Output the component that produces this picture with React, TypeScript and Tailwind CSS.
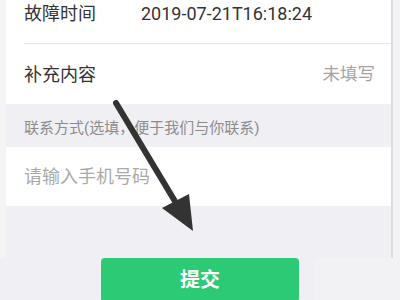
export default function App() {
  return (
    <div
      className="relative w-[400px] h-[300px] overflow-hidden bg-[#f3f3f5] text-[#333]"
      style={{ fontFamily: "Roboto, 'Noto Sans CJK SC', sans-serif" }}
    >
      <div className="flex h-[258px]">
        <div className="w-[6px] bg-[#f4f4f5]" />
        <div className="flex flex-col flex-1 border-r-2 border-[#dcdce0] bg-[#efeff4]">
          <div className="bg-white -mt-[16px]">
            <div className="flex items-center h-[60px] ml-[18px] border-b border-[#e6e6e6]">
              <span className="text-[18px] w-[117px]">故障时间</span>
              <span className="text-[18px]">2019-07-21T16:18:24</span>
            </div>
            <div className="flex items-center justify-between h-[60px] pl-[18px] pr-[16px]">
              <span className="text-[18px]">补充内容</span>
              <span className="text-[17.5px] text-[#a3a3a3]">未填写</span>
            </div>
          </div>
          <div className="h-[43px] flex items-end pb-[8px] pl-[18px] text-[15px] text-[#8c8c8c]">
            联系方式(选填，便于我们与你联系)
          </div>
          <div className="bg-white h-[59px] flex items-center pl-[18px] text-[18px] text-[#aaaaaa]">
            请输入手机号码
          </div>
        </div>
        <div className="w-[7px] bg-[#f3f3f5]" />
      </div>
      <div className="grid grid-cols-[315px_1fr] h-[42px]">
        <div className="bg-[#efeff4] pl-[101px]">
          <button className="w-[198px] h-[44px] rounded-[4px] bg-[#2dca75] text-white text-[20px] font-bold">
            提交
          </button>
        </div>
        <div className="bg-[#f2f2f4]" />
      </div>
      <svg
        className="absolute inset-0 pointer-events-none"
        width="400"
        height="300"
        viewBox="0 0 400 300"
      >
        <line x1="116" y1="103" x2="176" y2="203" stroke="#333" strokeWidth="6" strokeLinecap="round" />
        <polygon points="162,208 189,194 193,231" fill="#333" />
      </svg>
    </div>
  );
}
